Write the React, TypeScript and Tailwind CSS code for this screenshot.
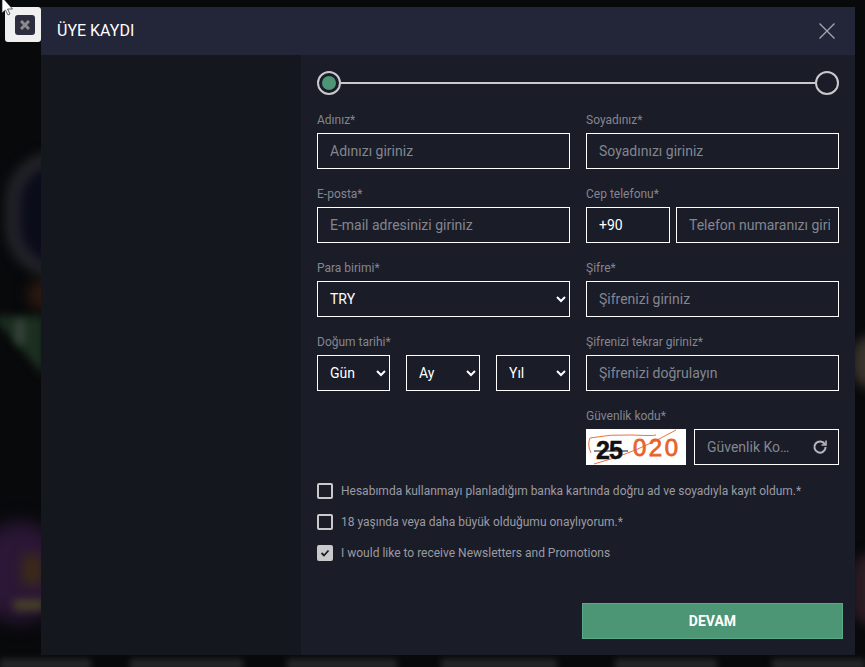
import React from "react";

const Field = ({ label, children }: { label: string; children: React.ReactNode }) => (
  <div className="h-[74px]">
    <label className="block h-[22px] pt-[2px] text-[12px] leading-[14px] text-[#84868f]">{label}</label>
    {children}
  </div>
);

const inputCls =
  "block h-9 w-full min-w-0 border border-white bg-transparent pl-3 pr-2 text-[14px] text-white outline-none placeholder:text-[#83868f]";
const selectCls = "block h-9 w-full border border-white bg-[#1a1c28] px-2 text-[14px] text-white outline-none";

const TextField = ({ label, placeholder }: { label: string; placeholder: string }) => (
  <Field label={label}>
    <input className={inputCls} placeholder={placeholder} />
  </Field>
);

const Check = ({ text, checked }: { text: string; checked?: boolean }) => (
  <div className="flex h-[31px] items-center gap-2 text-[12px] text-[#9a9ba2]">
    <span
      className={
        checked
          ? "flex h-4 w-4 items-center justify-center rounded-[2px] bg-[#c9c9cc]"
          : "h-4 w-4 rounded-[2px] border-2 border-[#c9c9cc]"
      }
    >
      {checked && (
        <svg width="10" height="10" viewBox="0 0 10 10" fill="none" stroke="#1a1c28" strokeWidth="1.8">
          <path d="M1.5 5l2.5 2.5 4.5-5" />
        </svg>
      )}
    </span>
    {text}
  </div>
);

const Captcha = () => (
  <svg width="100" height="36" viewBox="0 0 100 36" className="shrink-0 bg-white">
    <path d="M4 9Q24 5 46 6T70 6M4 9Q1 16 5 24" stroke="#e8622a" strokeWidth="0.9" fill="none" />
    <path d="M8 35Q50 24 90 1" stroke="#e8622a" strokeWidth="0.9" fill="none" />
    <text x="10" y="30" fontFamily="Liberation Sans, sans-serif" fontWeight="700" fontSize="25" letterSpacing="-1" fill="#111" stroke="#111" strokeWidth="0.5">
      25
    </text>
    <path d="M8 22h34" stroke="#111" strokeWidth="1" />
    <text
      x="47"
      y="27"
      fontFamily="Liberation Sans, sans-serif"
      fontSize="24"
      letterSpacing="2.5"
      fill="#e8622a"
      stroke="#e8622a"
      strokeWidth="0.8"
    >
      020
    </text>
  </svg>
);

export default function App() {
  return (
    <div className="relative h-[667px] w-[865px] overflow-hidden bg-[#08090b] font-['Roboto',sans-serif]">
      {/* blurred page behind the modal */}
      <div className="absolute left-[6px] top-[152px] h-[125px] w-[100px] rounded-full border-[13px] border-[#25262b] bg-[#0b0c1a] blur-[6px]" />
      <div className="absolute left-[28px] top-[280px] h-[30px] w-[30px] rounded-full bg-[#2e1a10] blur-[7px]" />
      <div className="absolute left-[-8px] top-[316px] h-[60px] w-[52px] blur-[4px]">
        <div className="h-full w-full bg-[#1c2f20] [clip-path:polygon(0_0,100%_0,100%_100%)]" />
      </div>
      <div className="absolute left-[16px] top-[320px] h-[24px] w-[8px] bg-[#3c4640] blur-[4px]" />
      <div className="absolute left-[-25px] top-[522px] h-[100px] w-[90px] rounded-full bg-[#2b1736] blur-[9px]" />
      <div className="absolute left-[22px] top-[555px] h-[30px] w-[20px] bg-[#3c2a18] blur-[6px]" />
      <div className="absolute left-[14px] top-[600px] h-[10px] w-[30px] bg-[#4a4528] blur-[4px]" />
      <div className="absolute left-[852px] top-[336px] h-[52px] w-[40px] rounded-full bg-[#3a332c] blur-[6px]" />
      <div className="absolute left-[852px] top-[553px] h-[72px] w-[40px] rounded-full bg-[#2c1c24] blur-[6px]" />
      <div className="absolute bottom-[-3px] left-0 h-[11px] w-[91px] bg-[#262728] blur-[3px]" />
      <div className="absolute bottom-[-3px] left-[130px] h-[11px] w-[113px] bg-[#262728] blur-[3px]" />
      <div className="absolute bottom-[-3px] left-[287px] h-[11px] w-[110px] bg-[#262728] blur-[3px]" />
      <div className="absolute bottom-[-3px] left-[441px] h-[11px] w-[116px] bg-[#262728] blur-[3px]" />
      <div className="absolute bottom-[-3px] left-[615px] h-[11px] w-[102px] bg-[#262728] blur-[3px]" />
      <div className="absolute bottom-[-3px] left-[772px] h-[11px] w-[93px] bg-[#262728] blur-[3px]" />

      {/* broken close image */}
      <div className="absolute left-[5px] top-[7px] z-10 flex h-[35px] w-[36px] items-start rounded-[3px] bg-[#f0f0f0] pl-[10px] pt-2">
        <div className="flex h-5 w-5 items-center justify-center rounded-[3px] bg-[#2c2e40]">
          <svg width="10" height="10" viewBox="0 0 10 10" stroke="#8a8a8a" strokeWidth="3">
            <path d="M1 1l8 8M9 1l-8 8" />
          </svg>
        </div>
      </div>
      <svg width="14" height="18" viewBox="0 0 14 18" className="absolute left-[1px] top-0 z-20">
        <path d="M1-3v16l3.5-3 2.5 5 2-1-2.5-5h5z" fill="#fff" stroke="#222" strokeWidth="0.7" />
      </svg>

      <div className="relative ml-[41px] mt-[7px] h-[648px] w-[814px]">
        <div className="flex h-12 items-center justify-between bg-[#232638] pl-4 pr-[20px]">
          <h1 className="text-[16px] font-normal text-white">ÜYE KAYDI</h1>
          <svg width="16" height="16" viewBox="0 0 16 16" stroke="#a6a8b0" strokeWidth="1.3">
            <path d="M0.5 0.5l15 15M15.5 0.5l-15 15" />
          </svg>
        </div>

        <div className="flex h-[600px]">
          <div className="w-[260px] shrink-0 bg-[#14171e]" />
          <div className="w-[554px] shrink-0 bg-[#1a1c28] px-4">
            <div className="flex h-[56px] w-[522px] items-center">
              <span className="flex h-6 w-6 shrink-0 items-center justify-center rounded-full border-2 border-[#c9c9cc]">
                <span className="h-[14px] w-[14px] rounded-full bg-[#4c9676]" />
              </span>
              <span className="h-[2px] flex-1 bg-[#c9c9cc]" />
              <span className="h-6 w-6 shrink-0 rounded-full border-2 border-[#c9c9cc]" />
            </div>

            <div className="grid w-[522px] grid-cols-2 gap-x-4">
              <TextField label="Adınız*" placeholder="Adınızı giriniz" />
              <TextField label="Soyadınız*" placeholder="Soyadınızı giriniz" />
              <TextField label="E-posta*" placeholder="E-mail adresinizi giriniz" />
              <Field label="Cep telefonu*">
                <div className="flex gap-[6px]">
                  <input className={inputCls + " !w-[84px] shrink-0 placeholder:text-white"} placeholder="+90" />
                  <input className={inputCls} placeholder="Telefon numaranızı giriniz" />
                </div>
              </Field>
              <Field label="Para birimi*">
                <select className={selectCls}>
                  <option>TRY</option>
                </select>
              </Field>
              <TextField label="Şifre*" placeholder="Şifrenizi giriniz" />
              <Field label="Doğum tarihi*">
                <div className="grid grid-cols-[73px_74px_74px] gap-4">
                  <select className={selectCls}>
                    <option>Gün</option>
                  </select>
                  <select className={selectCls}>
                    <option>Ay</option>
                  </select>
                  <select className={selectCls}>
                    <option>Yıl</option>
                  </select>
                </div>
              </Field>
              <TextField label="Şifrenizi tekrar giriniz*" placeholder="Şifrenizi doğrulayın" />
              <div />
              <Field label="Güvenlik kodu*">
                <div className="flex gap-2">
                  <Captcha />
                  <div className="flex h-9 flex-1 items-center justify-between border border-white pl-3 pr-[10px] text-[14px] text-[#83868f]">
                    Güvenlik Ko…
                    <svg width="16" height="16" viewBox="0 0 16 16" fill="none" stroke="#b5b6bb" strokeWidth="2">
                      <path d="M13 5.5A5.6 5.6 0 1 0 13.6 8" />
                      <path d="M14 1.5v4.5H9.5" strokeWidth="1.6" />
                    </svg>
                  </div>
                </div>
              </Field>
            </div>

            <div className="mt-[-6px]">
              <Check text="Hesabımda kullanmayı planladığım banka kartında doğru ad ve soyadıyla kayıt oldum.*" />
              <Check text="18 yaşında veya daha büyük olduğumu onaylıyorum.*" />
              <Check checked text="I would like to receive Newsletters and Promotions" />
            </div>

            <div className="ml-[265px] mt-[35px] flex h-9 w-[261px] items-center justify-center border border-[#5aaa88] bg-[#4c9676] text-[14px] font-bold text-white">
              DEVAM
            </div>
          </div>
        </div>
      </div>
    </div>
  );
}
